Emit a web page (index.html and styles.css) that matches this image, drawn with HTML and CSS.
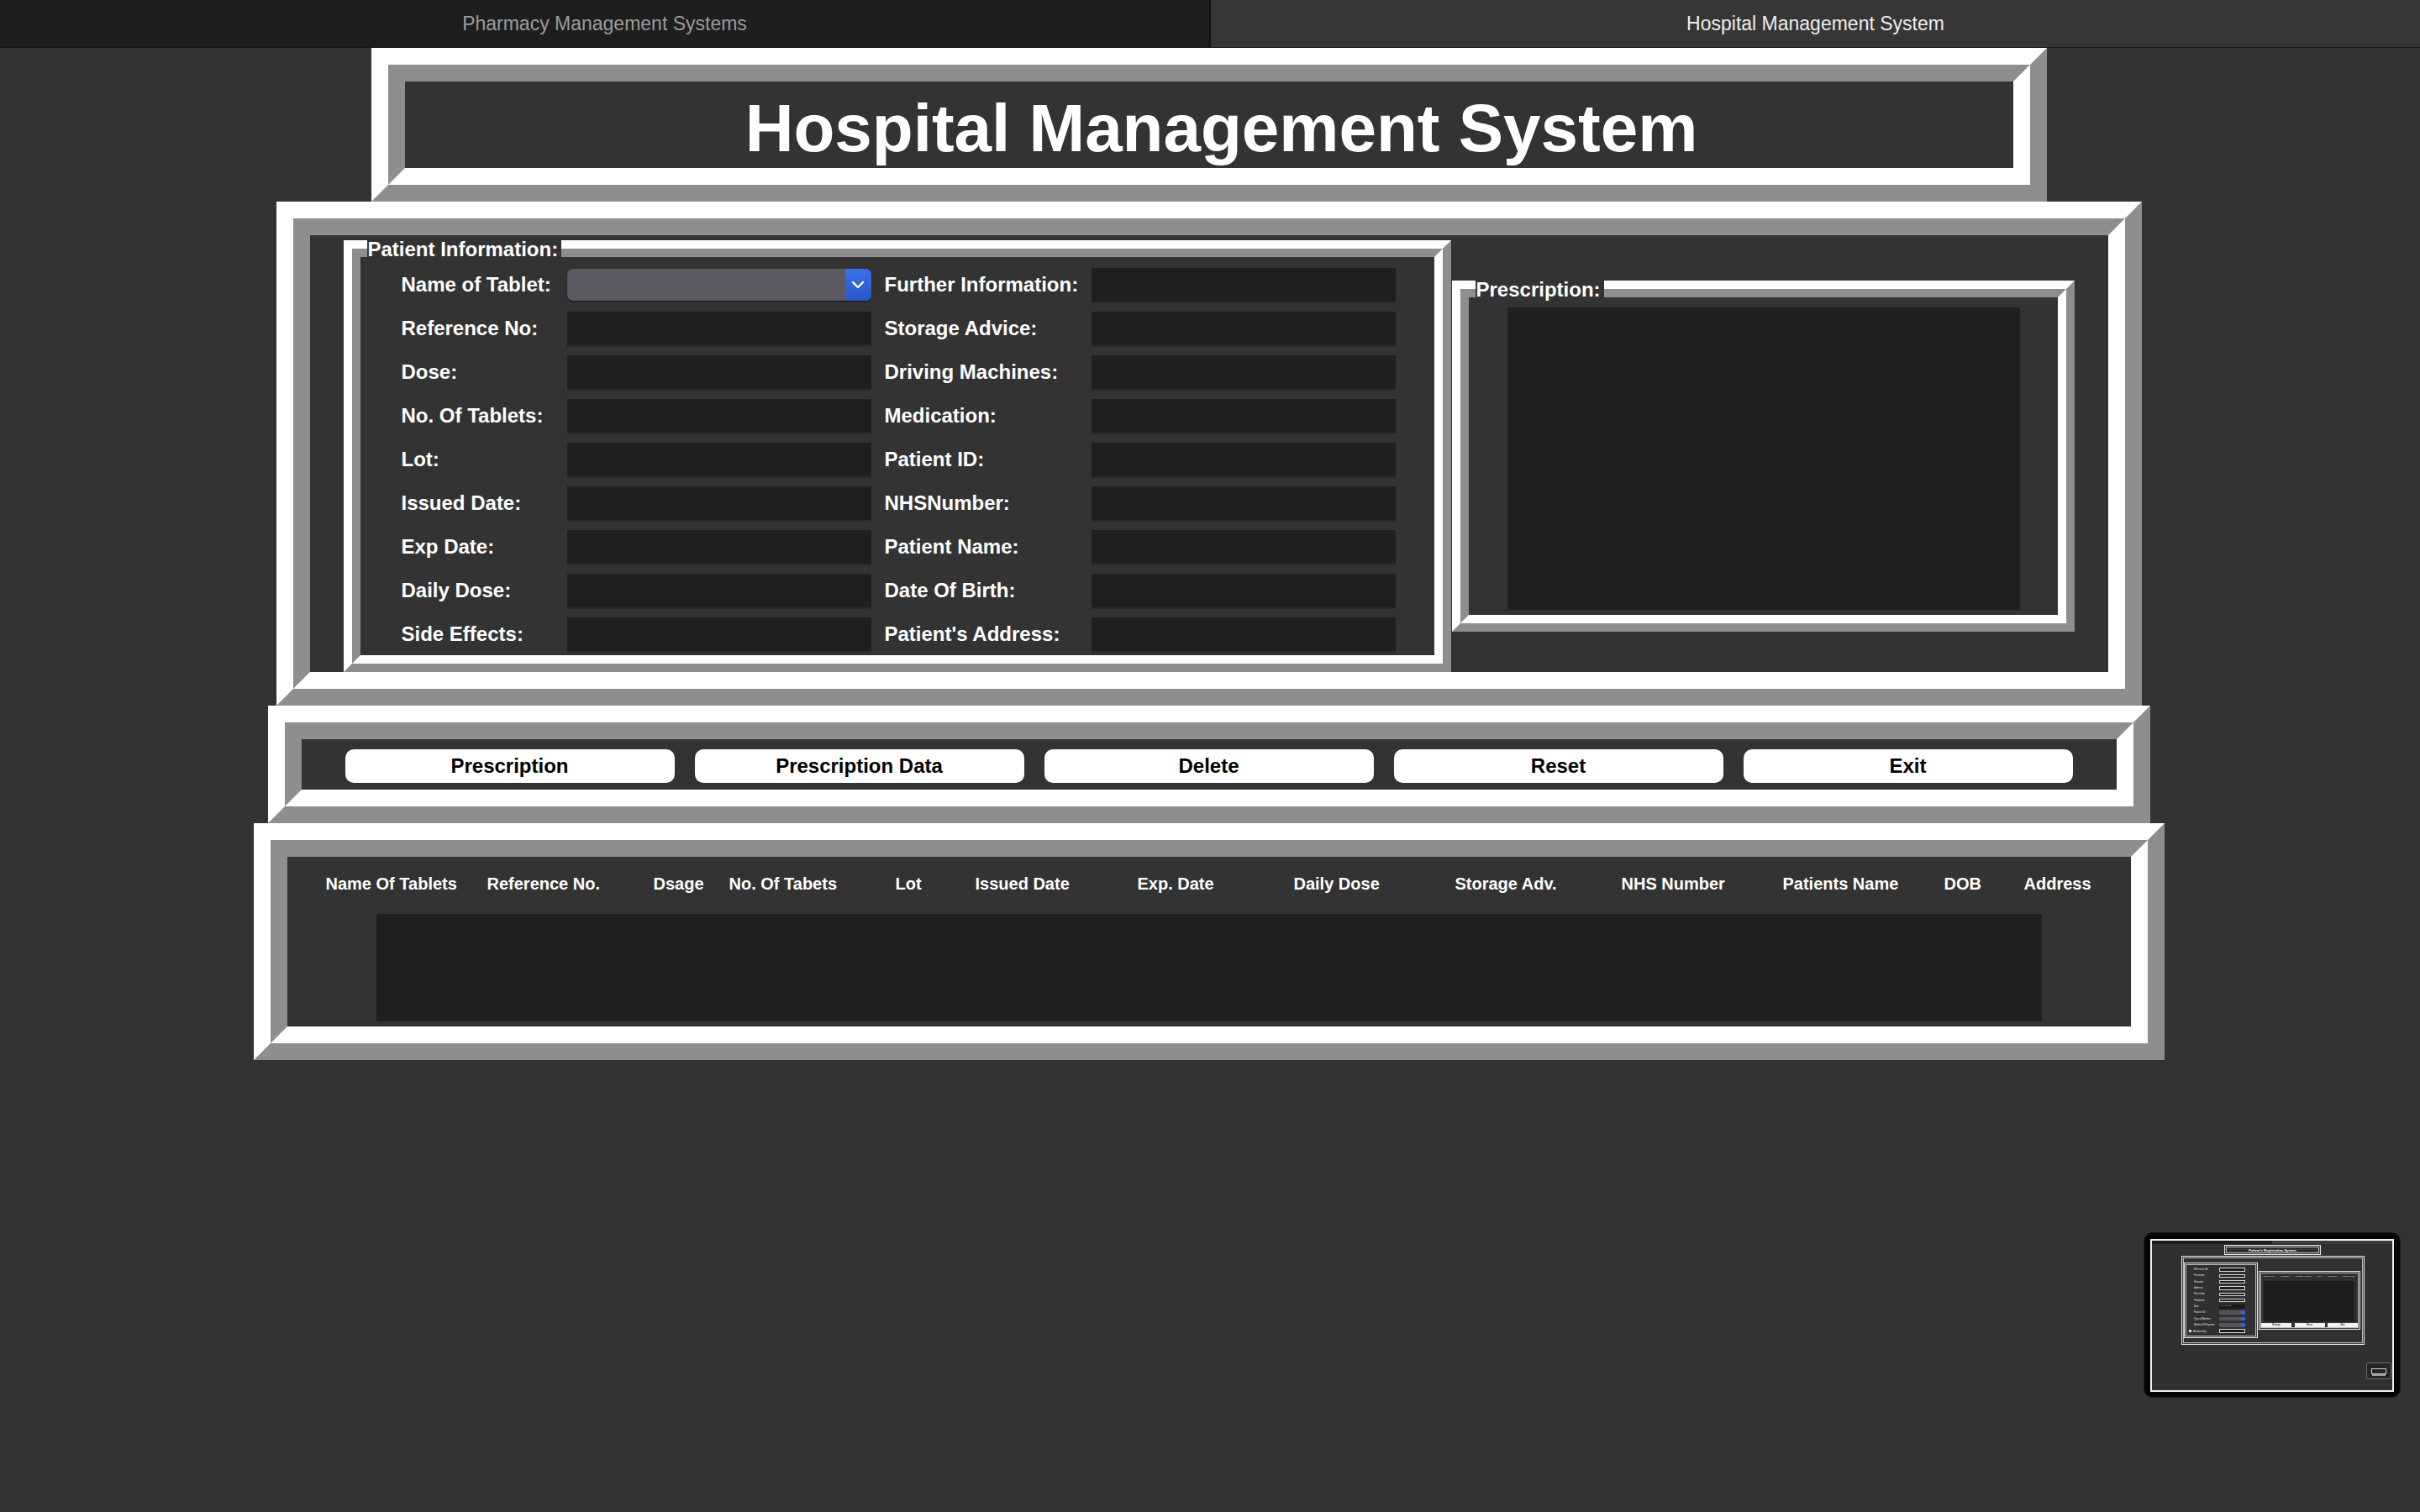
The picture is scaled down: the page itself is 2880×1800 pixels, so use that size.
FILE: index.html
```html
<!DOCTYPE html>
<html lang="en">
<head>
<meta charset="utf-8">
<title>Hospital Management System</title>
<link rel="stylesheet" href="styles.css">
</head>
<body>
<div class="tabs">
  <div class="tab">Pharmacy Management Systems</div>
  <div class="tab active">Hospital Management System</div>
</div>

<div class="page">
  <div class="ridge title-frame">
    <div class="ridge-in title-in"><h1 class="title">Hospital Management System</h1></div>
  </div>

  <div class="ridge main-frame">
    <div class="ridge-in main-inner">
      <div class="ridge thin lf-patient">
        <div class="lf-label">Patient Information:</div>
        <div class="ridge-in">
          <div class="form-grid">
            <div class="fl">Name of Tablet:</div>
            <div class="combo"><div class="combo-btn"><svg width="16" height="10" viewBox="0 0 16 10"><polyline points="2,2 8,8 14,2" fill="none" stroke="#fff" stroke-width="2.4" stroke-linecap="round" stroke-linejoin="round"/></svg></div></div>
            <div class="fl fl2">Further Information:</div>
            <div class="entry"></div>

            <div class="fl">Reference No:</div><div class="entry"></div>
            <div class="fl fl2">Storage Advice:</div><div class="entry"></div>

            <div class="fl">Dose:</div><div class="entry"></div>
            <div class="fl fl2">Driving Machines:</div><div class="entry"></div>

            <div class="fl">No. Of Tablets:</div><div class="entry"></div>
            <div class="fl fl2">Medication:</div><div class="entry"></div>

            <div class="fl">Lot:</div><div class="entry"></div>
            <div class="fl fl2">Patient ID:</div><div class="entry"></div>

            <div class="fl">Issued Date:</div><div class="entry"></div>
            <div class="fl fl2">NHSNumber:</div><div class="entry"></div>

            <div class="fl">Exp Date:</div><div class="entry"></div>
            <div class="fl fl2">Patient Name:</div><div class="entry"></div>

            <div class="fl">Daily Dose:</div><div class="entry"></div>
            <div class="fl fl2">Date Of Birth:</div><div class="entry"></div>

            <div class="fl">Side Effects:</div><div class="entry"></div>
            <div class="fl fl2">Patient's Address:</div><div class="entry"></div>
          </div>
        </div>
      </div>

      <div class="ridge thin lf-presc">
        <div class="lf-label">Prescription:</div>
        <div class="ridge-in"><div class="text-area"></div></div>
      </div>
    </div>
  </div>

  <div class="ridge btn-frame">
    <div class="ridge-in btn-inner">
      <div class="btn">Prescription</div>
      <div class="btn">Prescription Data</div>
      <div class="btn">Delete</div>
      <div class="btn">Reset</div>
      <div class="btn">Exit</div>
    </div>
  </div>

  <div class="ridge table-frame">
    <div class="ridge-in">
      <div class="thead">
        <div>Name Of Tablets</div>
        <div>Reference No.</div>
        <div>Dsage</div>
        <div>No. Of Tabets</div>
        <div>Lot</div>
        <div>Issued Date</div>
        <div>Exp. Date</div>
        <div>Daily Dose</div>
        <div>Storage Adv.</div>
        <div>NHS Number</div>
        <div>Patients Name</div>
        <div>DOB</div>
        <div>Address</div>
      </div>
      <div class="tlist"></div>
    </div>
  </div>
</div>

<div class="shot">
  <div class="shot-img">
    <div class="m-tabs"><div class="m-tab"></div><div class="m-tab m-tab-on"></div></div>
    <div class="m-box m-title"><span>Patient's Registration System</span></div>
    <div class="m-box m-main"></div>
    <div class="m-box m-lf"></div>
    <div class="m-form">
      <div class="m-l">Reference No</div><div class="m-f m-e"></div>
      <div class="m-l">Firstname</div><div class="m-f m-e"></div>
      <div class="m-l">Surname</div><div class="m-f m-e"></div>
      <div class="m-l">Address</div><div class="m-f m-e"></div>
      <div class="m-l">Post Code</div><div class="m-f m-e"></div>
      <div class="m-l">Telephone</div><div class="m-f m-e"></div>
      <div class="m-l">Date</div><div class="m-f m-d">yyyy-mm-dd</div>
      <div class="m-l">Proof of ID</div><div class="m-f m-c"></div>
      <div class="m-l">Type of Member</div><div class="m-f m-c"></div>
      <div class="m-l">Method Of Payment</div><div class="m-f m-c"></div>
      <div class="m-l m-chk">Membership</div><div class="m-f m-e"></div>
    </div>
    <div class="m-box m-right"></div>
    <div class="m-head">
      <span>Member Ref</span><span>Firstname</span><span>Surname Address</span><span>Date</span><span>Telephone</span><span>Member Paid</span>
    </div>
    <div class="m-list"></div>
    <div class="m-btns"><div class="m-btn">Receipt</div><div class="m-btn">Reset</div><div class="m-btn">Exit</div></div>
    <div class="m-icon"><div class="m-icon-in"></div></div>
  </div>
</div>
</body>
</html>
```

FILE: styles.css
```css
* { box-sizing: border-box; }

html, body { margin: 0; padding: 0; }

body {
  width: 2880px;
  height: 1800px;
  overflow: hidden;
  position: relative;
  background: #333333;
  font-family: "Liberation Sans", Arial, Helvetica, sans-serif;
}

/* ---------- tab bar ---------- */
.tabs {
  display: flex;
  height: 57px;
  border-bottom: 1px solid #151515;
}
.tab {
  flex: 1;
  display: flex;
  align-items: center;
  justify-content: center;
  background: #1e1e1e;
  color: #9b9b9b;
  font-size: 23px;
  border-right: 2px solid #111111;
}
.tab.active {
  background: #363636;
  color: #ededed;
  border-right: none;
}

/* ---------- page column ---------- */
.page {
  display: flex;
  flex-direction: column;
  align-items: center;
  padding-right: 3px;
}

/* ---------- ridge frames (Tk style) ---------- */
.ridge {
  position: relative;
  border: 20px solid;
  border-color: #ffffff #8e8e8e #8e8e8e #ffffff;
}
.ridge-in {
  height: 100%;
  border: 20px solid;
  border-color: #8e8e8e #ffffff #ffffff #8e8e8e;
  background: #333333;
}
.ridge.thin,
.ridge.thin > .ridge-in {
  border-width: 10px;
}

/* ---------- title ---------- */
.title-frame {
  width: 1994px;
  height: 183px;
}
.title-in {
  display: flex;
  align-items: center;
  justify-content: center;
  padding: 8px 0 0 30px;
}
.title {
  margin: 0;
  color: #ffffff;
  font-size: 80px;
  font-weight: bold;
  line-height: 1;
}

/* ---------- main frame ---------- */
.main-frame {
  width: 2220px;
  height: 600px;
}
.main-inner {
  display: flex;
  align-items: flex-start;
  padding: 0 40px;
}
.lf-patient {
  width: 1318px;
  height: 514px;
  margin-top: 6px;
}
.lf-presc {
  width: 741px;
  height: 418px;
  margin-top: 54px;
  margin-left: 1px;
}
.lf-label {
  position: absolute;
  left: 18px;
  top: -13px;
  z-index: 1;
  padding: 0 4px 0 1px;
  background: #333333;
  color: #ffffff;
  font-size: 24px;
  font-weight: bold;
  line-height: 28px;
  white-space: nowrap;
}

.form-grid {
  display: grid;
  grid-template-columns: 197px 362px 262px 362px;
  grid-auto-rows: 52px;
  align-items: center;
  padding: 7px 0 0 49px;
}
.fl {
  color: #ffffff;
  font-size: 24px;
  font-weight: bold;
  white-space: nowrap;
}
.fl2 { padding-left: 16px; }

.entry {
  height: 40px;
  background: #1f1f1f;
  box-shadow: 0 2px 0 #2a2a2a;
}
.combo {
  height: 38px;
  display: flex;
  justify-content: flex-end;
  background: #5a5860;
  border-radius: 7px;
  box-shadow: 0 1px 2px rgba(0, 0, 0, 0.6);
}
.combo-btn {
  width: 31px;
  display: flex;
  align-items: center;
  justify-content: center;
  background: linear-gradient(#3a73ea, #2856c8);
  border-radius: 0 7px 7px 0;
}

.text-area {
  width: 610px;
  height: 360px;
  margin: 12px 0 0 46px;
  background: #1f1f1f;
}

/* ---------- buttons ---------- */
.btn-frame {
  width: 2240px;
  height: 140px;
}
.btn-inner {
  display: flex;
  align-items: flex-start;
  gap: 24px;
  padding: 12px 0 0 52px;
}
.btn {
  width: 392px;
  height: 40px;
  display: flex;
  align-items: center;
  justify-content: center;
  background: #ffffff;
  border-radius: 10px;
  color: #000000;
  font-size: 24px;
  font-weight: bold;
}

/* ---------- table ---------- */
.table-frame {
  width: 2274px;
  height: 282px;
}
.thead {
  display: grid;
  grid-template-columns: 192px 198px 90px 198px 95px 193px 186px 192px 198px 192px 192px 95px auto;
  align-items: center;
  height: 64px;
  padding-left: 46px;
  color: #ffffff;
  font-size: 20px;
  font-weight: bold;
  white-space: nowrap;
}
.tlist {
  width: 1982px;
  height: 128px;
  margin: 4px 0 0 106px;
  background: #1f1f1f;
}

/* ---------- screenshot thumbnail (overlay) ---------- */
.shot {
  position: absolute;
  left: 2552px;
  top: 1468px;
  width: 304px;
  height: 195px;
  padding: 7px 7px 0 7px;
  background: #050505;
  border-radius: 10px;
  box-shadow: 0 0 0 1px #1a1a1a;
}
.shot-img {
  position: relative;
  width: 290px;
  height: 182px;
  border: 2px solid #f2f2f2;
  background: #303030;
  overflow: hidden;
  font-family: "Liberation Sans", Arial, sans-serif;
}
.m-tabs {
  display: flex;
  height: 4px;
}
.m-tab { flex: 1; background: #1b1b1b; }
.m-tab-on { background: #3a3a3a; }

.m-box {
  position: absolute;
  border: 1px solid #e6e6e6;
  box-shadow: inset 0 0 0 1px #404040, inset 0 0 0 2px #bdbdbd;
}
.m-title {
  left: 86px; top: 5px; width: 115px; height: 12px;
  display: flex; align-items: center; justify-content: center;
}
.m-title span {
  color: #ffffff;
  font-size: 4px;
  font-weight: bold;
  white-space: nowrap;
}
.m-main { left: 35px; top: 18px; width: 218px; height: 106px; }
.m-lf { left: 38px; top: 26px; width: 88px; height: 90px; }
.m-right { left: 127px; top: 36px; width: 121px; height: 70px; }

.m-form {
  position: absolute;
  left: 44px;
  top: 31px;
  display: grid;
  grid-template-columns: 36px 31px;
  grid-auto-rows: 7.3px;
  align-items: center;
}
.m-l {
  color: #c8c8c8;
  font-size: 2.6px;
  font-weight: bold;
  white-space: nowrap;
  padding-left: 6px;
}
.m-chk {
  padding-left: 0;
}
.m-chk::before {
  content: "";
  display: inline-block;
  width: 3px; height: 3px;
  margin-right: 2px;
  background: #e0e0e0;
}
.m-f { height: 4.5px; }
.m-e { background: #1d1d1d; border: 1px solid #d8d8d8; }
.m-d { background: #1a1a1a; color: #ccc; font-size: 2.4px; line-height: 4.5px; padding-left: 1px; }
.m-c { background: linear-gradient(to right, #55535b 85%, #2f63d8 85%); border-radius: 1px; }

.m-head {
  position: absolute;
  left: 133px; top: 41px; width: 108px;
  display: flex;
  justify-content: space-between;
  color: #bbbbbb;
  font-size: 2.2px;
  font-weight: bold;
  white-space: nowrap;
}
.m-list {
  position: absolute;
  left: 133px; top: 48px; width: 108px; height: 48px;
  background: #1e1e1e;
}
.m-btns {
  position: absolute;
  left: 130px; top: 98px;
  display: flex;
  gap: 3.5px;
}
.m-btn {
  width: 36px; height: 5px;
  background: #f2f2f2;
  color: #222;
  font-size: 2.6px;
  font-weight: bold;
  line-height: 5px;
  text-align: center;
}
.m-icon {
  position: absolute;
  left: 255px; top: 145px; width: 30px; height: 20px;
  border: 1px solid #6a6a6a;
  border-radius: 2px;
  background: #262626;
  display: flex;
  align-items: center;
  justify-content: center;
}
.m-icon-in {
  width: 18px; height: 7px;
  border: 1px solid #cfcfcf;
  box-shadow: 0 3px 0 -1px #9a9a9a;
}
```
